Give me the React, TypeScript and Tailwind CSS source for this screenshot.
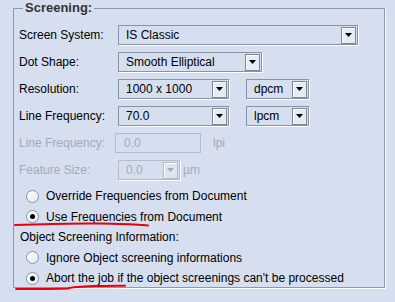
import React from "react";

const font = { fontFamily: '"Liberation Sans", Arial, sans-serif' };

function Arrow({ disabled }: { disabled?: boolean }) {
  return (
    <div
      className={`flex w-[15px] h-[17px] mr-[1px] items-center justify-center border ${
        disabled ? "border-[#b4bccb] bg-[#dde5f1]" : "border-[#7d8796] bg-[#e6ecf6]"
      } shadow-[inset_1px_1px_0_#fff]`}
    >
      <svg width="7" height="4" viewBox="0 0 7 4">
        <path d="M0 0h7L3.5 4z" fill={disabled ? "#a3abb8" : "#000"} />
      </svg>
    </div>
  );
}

function Combo({ value, w, disabled }: { value: string; w: string; disabled?: boolean }) {
  return (
    <div
      className={`flex h-[20px] items-center justify-between border ${
        disabled ? "border-[#b4bccb] text-[#a3abb8]" : "border-[#8a93a1] text-black"
      } shadow-[1px_1px_0_#fff] ${w}`}
    >
      <span className="pl-[7px] leading-none">{value}</span>
      <Arrow disabled={disabled} />
    </div>
  );
}

function Row({ label, children, disabled }: { label: string; children: React.ReactNode; disabled?: boolean }) {
  return (
    <div className="flex items-center h-[20px]">
      <div className={`w-[99px] ${disabled ? "text-[#a3abb8]" : "text-black"}`}>{label}</div>
      {children}
    </div>
  );
}

function Radio({ label, checked }: { label: string; checked?: boolean }) {
  return (
    <div className="flex items-center h-[20px] pl-[7px]">
      <div className="flex w-[13px] h-[13px] items-center justify-center rounded-full border border-[#8a93a1] bg-gradient-to-br from-[#ffffff] to-[#e3e9f2]">
        {checked && <div className="w-[5px] h-[5px] rounded-full bg-black" />}
      </div>
      <span className="ml-[7px] text-black">{label}</span>
    </div>
  );
}

export default function App() {
  return (
    <div className="relative w-[395px] h-[302px] bg-[#d5dfef] text-[12px] overflow-hidden" style={font}>
      <fieldset className="ml-[13px] mt-[1px] w-[372px] h-[287px] border border-[#8f98a6] shadow-[1px_1px_0_#fff] pl-[5px]">
        <legend className="ml-[4px] px-[2px] text-[13px] font-bold leading-[14px] text-[#333]">Screening:</legend>
        <div className="flex flex-col gap-[7px] mt-[10px]">
          <Row label="Screen System:">
            <Combo value="IS Classic" w="w-[240px]" />
          </Row>
          <Row label="Dot Shape:">
            <Combo value="Smooth Elliptical" w="w-[144px]" />
          </Row>
          <Row label="Resolution:">
            <Combo value="1000 x 1000" w="w-[111px]" />
            <div className="ml-[17px]">
              <Combo value="dpcm" w="w-[63px]" />
            </div>
          </Row>
          <Row label="Line Frequency:">
            <Combo value="70.0" w="w-[111px]" />
            <div className="ml-[17px]">
              <Combo value="lpcm" w="w-[63px]" />
            </div>
          </Row>
          <Row label="Line Frequency:" disabled>
            <div className="-ml-[3px] flex h-[20px] w-[86px] items-center border border-[#b4bccb] pl-[8px] text-[#a3abb8]">0.0</div>
            <span className="ml-[12px] text-[#a3abb8]">lpi</span>
          </Row>
          <Row label="Feature Size:" disabled>
            <Combo value="0.0" w="w-[62px]" disabled />
            <span className="ml-[3px] text-[#a3abb8]">µm</span>
          </Row>
        </div>
        <div className="mt-[6px] flex flex-col gap-[0.5px]">
          <Radio label="Override Frequencies from Document" />
          <Radio label="Use Frequencies from Document" checked />
          <div className="h-[20px] flex items-center pl-[1px] text-black">Object Screening Information:</div>
          <Radio label="Ignore Object screening informations" />
          <Radio label="Abort the job if the object screenings can't be processed" checked />
        </div>
      </fieldset>
      <svg className="absolute left-0 top-0 pointer-events-none" width="395" height="302">
        <path d="M15 225 C40 224 70 223 100 223.5 C120 224 135 224 148 225.5" stroke="#e8000b" strokeWidth="2" fill="none" strokeLinecap="round" />
        <path d="M16 289 C35 289 55 289 68 288.5 C72 287 78 286.5 95 286 C110 285.7 118 285.5 125 285.8" stroke="#e8000b" strokeWidth="2" fill="none" strokeLinecap="round" />
      </svg>
    </div>
  );
}
